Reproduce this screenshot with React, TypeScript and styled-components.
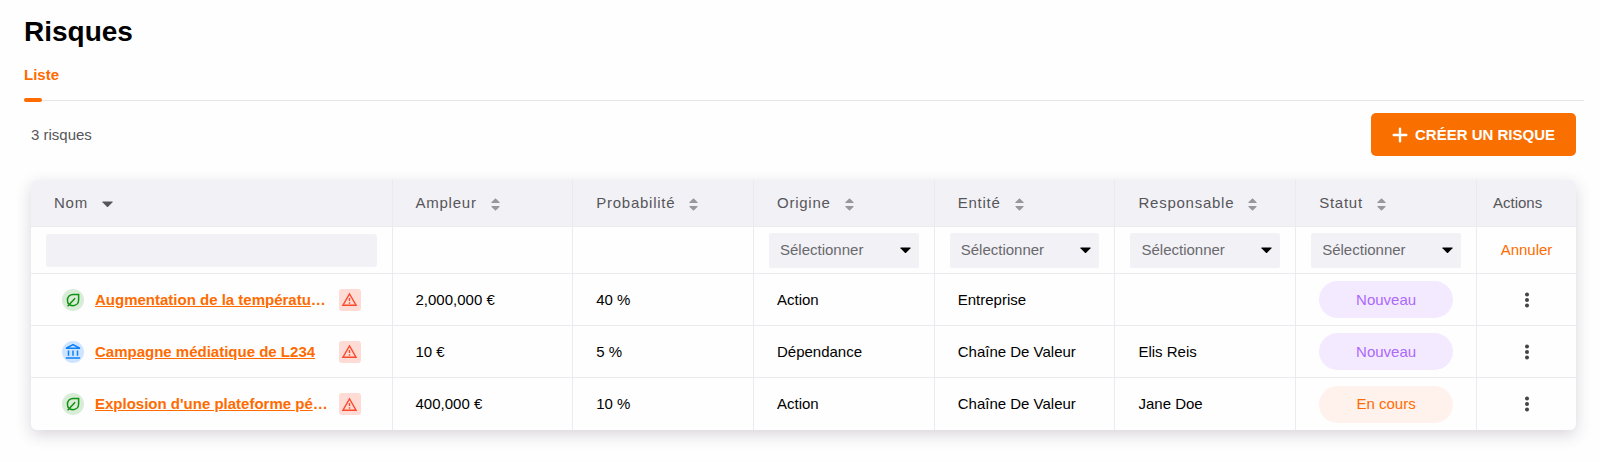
import React from "react";
import styled, { createGlobalStyle } from "styled-components";

const colors = {
  orange: "#ff6b00",
  button: "#fa7000",
  panel: "#f2f1f6",
  line: "#ebeaee",
  muted: "#56565a",
};

const GlobalStyle = createGlobalStyle`
  *, *::before, *::after { box-sizing: border-box; }
  body {
    margin: 0;
    background: #fefefe;
    color: #000;
    font-family: "Liberation Sans", Arial, sans-serif;
    font-size: 15px;
    line-height: 18px;
  }
  button, input, select { font: inherit; }
`;

const Page = styled.main`
  padding: 16px 16px 32px 24px;
`;

const Title = styled.h1`
  margin: 0;
  font-size: 28px;
  line-height: 32px;
`;

const Tabs = styled.nav`
  display: flex;
  padding-top: 18px;
  border-bottom: 1px solid #e6e5e8;
`;

const Tab = styled.a`
  position: relative;
  padding-bottom: 16px;
  color: ${colors.orange};
  font-weight: bold;
  text-decoration: none;

  &::after {
    content: "";
    position: absolute;
    left: 0;
    bottom: -2px;
    width: 50%;
    height: 4px;
    border-radius: 2px;
    background: ${colors.orange};
  }
`;

const Content = styled.section`
  padding: 12px 8px 0 7px;
`;

const Toolbar = styled.div`
  display: flex;
  align-items: center;
  justify-content: space-between;
  margin-bottom: 24px;
`;

const Count = styled.span`
  color: ${colors.muted};
`;

const CreateButton = styled.button`
  display: flex;
  align-items: center;
  gap: 7px;
  height: 43px;
  padding: 0 21px;
  border: 0;
  border-radius: 5px;
  background: ${colors.button};
  color: #fff;
  font-weight: bold;
  text-transform: uppercase;
`;

const Card = styled.div`
  overflow: hidden;
  border-radius: 6px;
  background: #fefefe;
  box-shadow: 0 5px 16px rgba(70, 50, 80, 0.2);
`;

const Table = styled.table`
  width: 100%;
  table-layout: fixed;
  border-collapse: separate;
  border-spacing: 0;
`;

const NameCol = styled.col`
  width: 23.4%;
`;

const ActionsCol = styled.col`
  width: 99px;
`;

const HeadCell = styled.th<{ $plain?: boolean }>`
  height: 47px;
  padding: 0 ${(p) => (p.$plain ? 16 : 23)}px;
  border-right: 1px solid ${colors.line};
  border-bottom: 1px solid ${colors.line};
  background: ${colors.panel};
  color: ${colors.muted};
  font-weight: normal;
  text-align: left;

  &:last-child { border-right: 0; }
`;

const SortButton = styled.button`
  display: flex;
  align-items: center;
  gap: 14px;
  padding: 0;
  border: 0;
  background: none;
  color: inherit;
  letter-spacing: 0.05em;

  svg { margin-top: 2px; }
`;

const FilterCell = styled.td`
  height: 47px;
  padding: 0 15px;
  border-right: 1px solid ${colors.line};
  border-bottom: 1px solid ${colors.line};
  text-align: center;

  &:last-child { border-right: 0; padding: 0; }
`;

const FilterInput = styled.input`
  display: block;
  width: 100%;
  height: 33px;
  padding: 0 11px;
  border: 0;
  border-radius: 3px;
  background: ${colors.panel};
`;

const SelectBox = styled.div`
  position: relative;
  color: #000;

  svg {
    position: absolute;
    right: 8px;
    top: 14px;
    pointer-events: none;
  }
`;

const FilterSelect = styled.select`
  display: block;
  width: 100%;
  height: 35px;
  padding: 0 28px 0 11px;
  border: 0;
  border-radius: 2px;
  appearance: none;
  background: ${colors.panel};
  color: #69696d;
`;

const CancelButton = styled.button`
  padding: 0;
  border: 0;
  background: none;
  color: ${colors.orange};
`;

const Cell = styled.td`
  height: 52px;
  padding: 0 23px;
  border-right: 1px solid ${colors.line};
  border-bottom: 1px solid ${colors.line};

  &:last-child { border-right: 0; padding: 0; }
  tr:last-child > & { border-bottom: 0; }
`;

const NameLayout = styled.div`
  display: flex;
  align-items: center;
  gap: 11px;
  padding: 0 8px;
`;

const KindIcon = styled.span<{ $kind: Kind }>`
  display: flex;
  flex: none;
  align-items: center;
  justify-content: center;
  width: 22px;
  height: 22px;
  border-radius: 50%;
  background: ${(p) => (p.$kind === "environment" ? "#d9ecd8" : "#cfe5ff")};
  color: ${(p) => (p.$kind === "environment" ? "#0f9210" : "#0b80f8")};
`;

const NameText = styled.div`
  flex: 1;
  min-width: 0;
  color: ${colors.orange};
  font-weight: bold;
  white-space: nowrap;
`;

const NameLink = styled.a`
  color: inherit;
`;

const AlertBadge = styled.span`
  display: flex;
  flex: none;
  align-items: center;
  justify-content: center;
  width: 22px;
  height: 22px;
  border-radius: 3px;
  background: #ffdbd5;
  color: #fb4a2b;
`;

const Pill = styled.span<{ $status: Status }>`
  display: flex;
  align-items: center;
  justify-content: center;
  height: 37px;
  border-radius: 19px;
  background: ${(p) => (p.$status === "Nouveau" ? "#f3eaff" : "#fff1ec")};
  color: ${(p) => (p.$status === "Nouveau" ? "#ac68fb" : colors.orange)};
`;

const MenuButton = styled.button`
  display: flex;
  margin: 0 auto;
  padding: 0;
  border: 0;
  background: none;
  color: #444448;
`;

type Kind = "environment" | "governance";
type Status = "Nouveau" | "En cours";

interface Risk {
  kind: Kind;
  name: string;
  shortened?: boolean;
  amount: string;
  probability: string;
  origin: string;
  entity: string;
  owner: string;
  status: Status;
}

const risks: Risk[] = [
  {
    kind: "environment",
    name: "Augmentation de la températu",
    shortened: true,
    amount: "2,000,000 €",
    probability: "40 %",
    origin: "Action",
    entity: "Entreprise",
    owner: "",
    status: "Nouveau",
  },
  {
    kind: "governance",
    name: "Campagne médiatique de L234",
    amount: "10 €",
    probability: "5 %",
    origin: "Dépendance",
    entity: "Chaîne De Valeur",
    owner: "Elis Reis",
    status: "Nouveau",
  },
  {
    kind: "environment",
    name: "Explosion d'une plateforme pé",
    shortened: true,
    amount: "400,000 €",
    probability: "10 %",
    origin: "Action",
    entity: "Chaîne De Valeur",
    owner: "Jane Doe",
    status: "En cours",
  },
];

const columns = ["Nom", "Ampleur", "Probabilité", "Origine", "Entité", "Responsable", "Statut"];
const selectFilters = ["Origine", "Entité", "Responsable", "Statut"];

const CaretDown = () => (
  <svg width="11" height="7" viewBox="0 0 11 7" fill="currentColor" aria-hidden="true">
    <path d="M.8.6h9.4q.8 0 .3.6L6.1 5.8q-.6.6-1.2 0L.5 1.2Q0 .6.8.6Z" />
  </svg>
);

const SortArrows = () => (
  <svg width="9" height="13" viewBox="0 0 9 13" fill="#98979c" aria-hidden="true">
    <path d="M4.5.3 8.6 4.2q.3.9-.6.9H1q-.9 0-.6-.9Z" />
    <path d="M4.5 12.7 8.6 8.8q.3-.9-.6-.9H1q-.9 0-.6.9Z" />
  </svg>
);

const PlusIcon = () => (
  <svg width="16" height="16" viewBox="0 0 16 16" fill="none" stroke="currentColor" strokeWidth="2.4" strokeLinecap="round" aria-hidden="true">
    <path d="M8 1.7v12.6M1.7 8h12.6" />
  </svg>
);

const LeafIcon = () => (
  <svg width="18" height="18" viewBox="0 0 24 24" fill="none" stroke="currentColor" strokeWidth="2" aria-hidden="true">
    <path d="M19.5 4.5h-7.3C7.8 4.5 4.6 7.7 4.6 12c0 2.6.6 4.7 1.9 5.9 1.3 1.1 3.2 1.6 5.5 1.6 4.300 0 7.500-3.200 7.500-7.500ZM4.800 20.200 14.800 9.800" />
  </svg>
);

const BankIcon = () => (
  <svg width="18" height="18" viewBox="0 0 23 24" fill="currentColor" aria-hidden="true">
    <path d="M6.500 10h-2v7h2v-7Zm6 0h-2v7h2v-7Zm8.500 9H2v2h19v-2Zm-2.500-9h-2v7h2v-7Zm-7-6.740L16.710 6H6.290l5.210-2.740m0-2.260L2 6v2h19V6l-9.500-5Z" />
  </svg>
);

const WarningIcon = () => (
  <svg width="17" height="17" viewBox="0 0 24 24" fill="currentColor" aria-hidden="true">
    <path d="M12 5.990 19.530 19H4.470L12 5.990M12 2 1 21h22L12 2Zm1 14h-2v2h2v-2Zm0-6h-2v4h2v-4Z" />
  </svg>
);

const DotsIcon = () => (
  <svg width="6" height="16" viewBox="0 0 6 16" fill="currentColor" aria-hidden="true">
    <circle cx="3" cy="2.400" r="2" />
    <circle cx="3" cy="8" r="2" />
    <circle cx="3" cy="13.600" r="2" />
  </svg>
);

export default function App() {
  return (
    <>
      <GlobalStyle />
      <Page>
        <Title>Risques</Title>
        <Tabs>
          <Tab href="#liste">Liste</Tab>
        </Tabs>
        <Content>
          <Toolbar>
            <Count>3 risques</Count>
            <CreateButton type="button">
              <PlusIcon />
              Créer un risque
            </CreateButton>
          </Toolbar>
          <Card>
            <Table>
              <colgroup>
                <NameCol />
                <col span={6} />
                <ActionsCol />
              </colgroup>
              <thead>
                <tr>
                  {columns.map((label, index) => (
                    <HeadCell key={label} scope="col">
                      <SortButton type="button">
                        {label}
                        {index === 0 ? <CaretDown /> : <SortArrows />}
                      </SortButton>
                    </HeadCell>
                  ))}
                  <HeadCell scope="col" $plain>
                    Actions
                  </HeadCell>
                </tr>
              </thead>
              <tbody>
                <tr>
                  <FilterCell>
                    <FilterInput type="text" aria-label="Nom" />
                  </FilterCell>
                  <FilterCell />
                  <FilterCell />
                  {selectFilters.map((label) => (
                    <FilterCell key={label}>
                      <SelectBox>
                        <FilterSelect aria-label={label}>
                          <option>Sélectionner</option>
                        </FilterSelect>
                        <CaretDown />
                      </SelectBox>
                    </FilterCell>
                  ))}
                  <FilterCell>
                    <CancelButton type="button">Annuler</CancelButton>
                  </FilterCell>
                </tr>
                {risks.map((risk) => (
                  <tr key={risk.name}>
                    <Cell>
                      <NameLayout>
                        <KindIcon $kind={risk.kind}>
                          {risk.kind === "environment" ? <LeafIcon /> : <BankIcon />}
                        </KindIcon>
                        <NameText>
                          <NameLink href="#risque">{risk.name}</NameLink>
                          {risk.shortened && "…"}
                        </NameText>
                        <AlertBadge>
                          <WarningIcon />
                        </AlertBadge>
                      </NameLayout>
                    </Cell>
                    <Cell>{risk.amount}</Cell>
                    <Cell>{risk.probability}</Cell>
                    <Cell>{risk.origin}</Cell>
                    <Cell>{risk.entity}</Cell>
                    <Cell>{risk.owner}</Cell>
                    <Cell>
                      <Pill $status={risk.status}>{risk.status}</Pill>
                    </Cell>
                    <Cell>
                      <MenuButton type="button" aria-label="Actions">
                        <DotsIcon />
                      </MenuButton>
                    </Cell>
                  </tr>
                ))}
              </tbody>
            </Table>
          </Card>
        </Content>
      </Page>
    </>
  );
}
